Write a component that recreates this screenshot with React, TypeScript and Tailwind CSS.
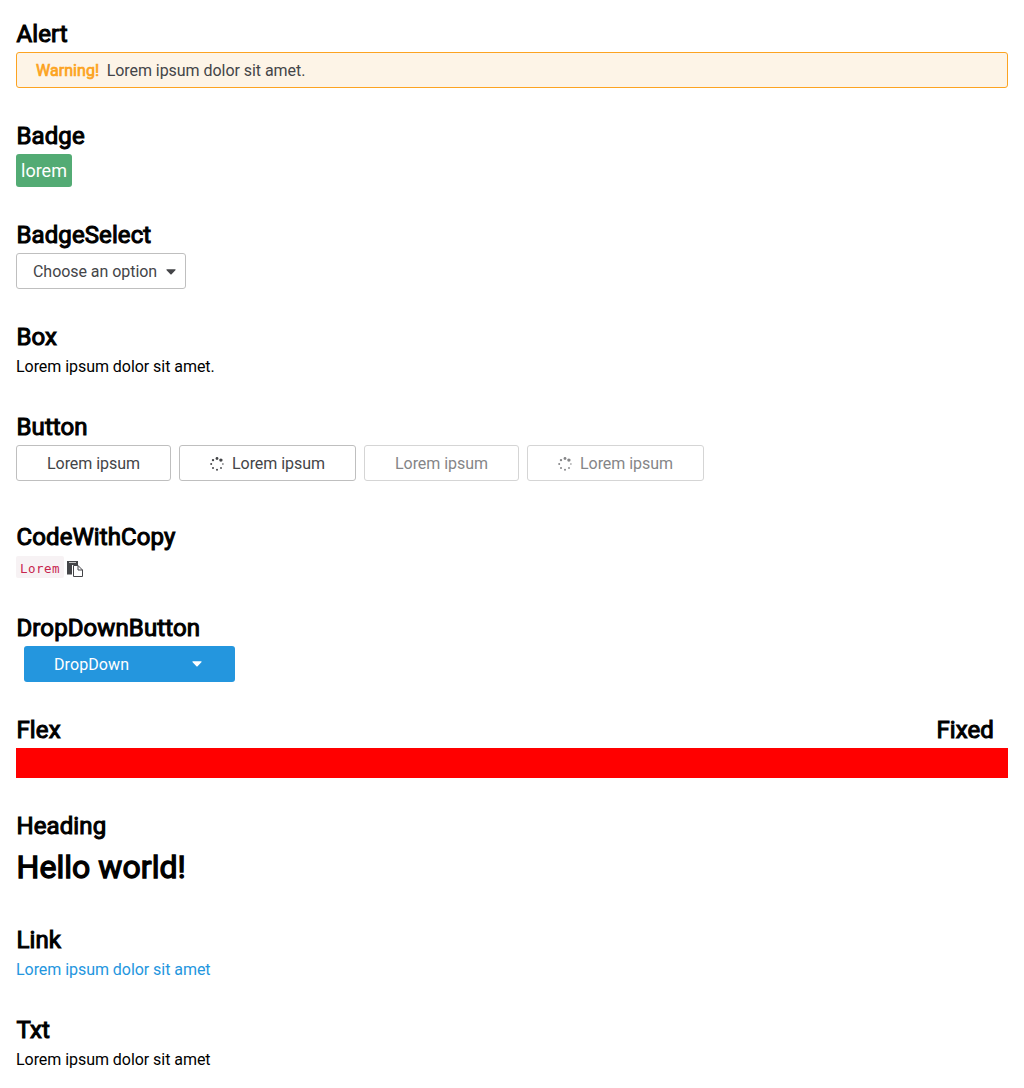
import React from "react";

function Title({ children }: { children: React.ReactNode }) {
  return (
    <h2 className="h-7 pl-[0.5px] text-2xl leading-7 font-normal tracking-[0.1px] [-webkit-text-stroke:1.05px_#000] whitespace-nowrap">{children}</h2>
  );
}

function Caret({ className = "" }: { className?: string }) {
  return (
    <svg viewBox="0 0 10 6" className={`h-[6px] w-[10px] ${className}`} fill="currentColor">
      <path d="M1 .3h8a.5.5 0 0 1 .4.9L5.600 5.200a.8.8 0 0 1-1.200 0L.6 1.200A.5.5 0 0 1 1 .3z" />
    </svg>
  );
}

function Spinner() {
  return (
    <svg viewBox="0 0 14 14" className="mt-px h-[14px] w-[14px]" fill="currentColor">
      <circle cx="7" cy="1.500" r="1.400" />
      <circle cx="10.900" cy="3.100" r="1.700" />
      <circle cx="12.900" cy="7" r=".8" />
      <circle cx="11" cy="11" r=".9" />
      <circle cx="7" cy="12.800" r="1" />
      <circle cx="3" cy="11" r="1" />
      <circle cx="1.200" cy="7" r="1" />
      <circle cx="3" cy="3.100" r="1.200" />
    </svg>
  );
}

function Button({ busy = false, disabled = false }: { busy?: boolean; disabled?: boolean }) {
  return (
    <button
      disabled={disabled}
      className={`flex h-9 items-center gap-2 rounded-[3px] border border-[#bfbfbf] bg-white pl-[30px] text-base tracking-[-0.05px] whitespace-nowrap text-[#444548] disabled:opacity-65 ${busy ? "w-[177px]" : "w-[155px]"}`}
    >
      {busy && <Spinner />}
      <span className="pt-px">Lorem ipsum</span>
    </button>
  );
}

export default function App() {
  return (
    <main className="h-[1088px] overflow-hidden bg-white px-4 pt-5 font-['Roboto',sans-serif] text-base leading-6 tracking-[-0.05px] text-black">
      <section className="h-[102px]">
        <Title>Alert</Title>
        <div className="mt-1 flex h-9 items-center gap-[7.500px] rounded-[3px] border border-[#fca321] bg-[#fdf4e7] px-[19px] pt-px text-[#444548]">
          <span className="tracking-[0.05px] text-[#fca321] [-webkit-text-stroke:0.7px_#fca321]">Warning!</span>
          <span>Lorem ipsum dolor sit amet.</span>
        </div>
      </section>
      <section className="h-[99px]">
        <Title>Badge</Title>
        <span className="mt-1 flex h-[33px] w-14 items-center justify-center rounded-[3px] bg-[#53ab74] text-lg tracking-normal text-white">lorem</span>
      </section>
      <section className="h-[102px]">
        <Title>BadgeSelect</Title>
        <button className="mt-1 flex h-9 w-[170px] items-center justify-between rounded-[3px] border border-[#bfbfbf] pt-px pr-[9px] pl-4 text-[#444548]">
          Choose an option
          <Caret />
        </button>
      </section>
      <section className="h-[90px]">
        <Title>Box</Title>
        <p className="pt-1">Lorem ipsum dolor sit amet.</p>
      </section>
      <section className="h-[110px]">
        <Title>Button</Title>
        <div className="mt-1 flex gap-2">
          <Button />
          <Button busy />
          <Button disabled />
          <Button busy disabled />
        </div>
      </section>
      <section className="h-[91px]">
        <Title>CodeWithCopy</Title>
        <div className="mt-[5px] flex h-[23px] items-start gap-[3px]">
          <code className="h-[22px] w-12 rounded-[2px] bg-[#f7f2f4] pt-[2px] pl-1 font-['DejaVu_Sans_Mono',monospace] text-[12.500px] leading-[22px] tracking-[0.5px] text-[#c7254e]">Lorem</code>
          <svg viewBox="0 0 16 16" className="mt-[5px] h-4 w-4 text-[#444548]" fill="currentColor">
            <path d="M0 0h11v4H5.500v9.500H0z" />
            <path d="M2 1.500h7" stroke="#c4c4c4" strokeWidth="1" />
            <path d="M5 4h7v1H6v9H5z" fill="#fff" />
            <path d="M6.500 4.500H11l4.500 4.500v6.500h-9z" fill="#fff" stroke="currentColor" />
            <path d="M11 4.500v4.500h4.500" fill="none" stroke="currentColor" />
          </svg>
        </div>
      </section>
      <section className="h-[102px]">
        <Title>DropDownButton</Title>
        <button className="mt-1 ml-2 flex h-9 w-[211px] items-center justify-between rounded-[3px] bg-[#2496de] pr-[33px] pl-[30px] tracking-[0.1px] text-white">
          <span className="pt-px">DropDown</span>
          <Caret />
        </button>
      </section>
      <section className="h-24">
        <div className="flex justify-between pr-[14px]">
          <Title>Flex</Title>
          <Title>Fixed</Title>
        </div>
        <div className="mt-1 h-[30px] bg-[#f00]" />
      </section>
      <section className="h-[114px]">
        <Title>Heading</Title>
        <h1 className="mt-2 pl-[0.5px] text-[32px] leading-[38px] tracking-[0.05px] [-webkit-text-stroke:1.300px_#000]">Hello world!</h1>
      </section>
      <section className="h-[90px]">
        <Title>Link</Title>
        <a className="block pt-1 text-[#2496de]">Lorem ipsum dolor sit amet</a>
      </section>
      <section>
        <Title>Txt</Title>
        <p className="pt-1">Lorem ipsum dolor sit amet</p>
      </section>
    </main>
  );
}
